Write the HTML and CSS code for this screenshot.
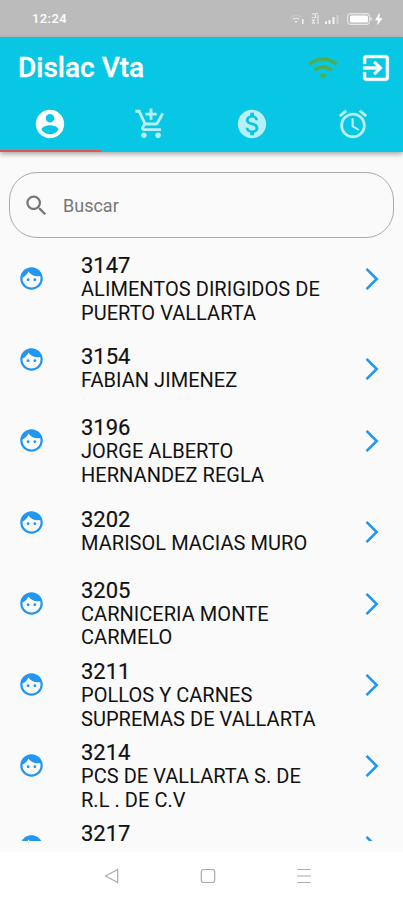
FILE: index.html
```
<!DOCTYPE html>
<html lang="es">
<head>
<meta charset="utf-8">
<title>Dislac Vta</title>
<link rel="stylesheet" href="styles.css">
</head>
<body>
<svg class="defs" width="0" height="0">
  <symbol id="face" viewBox="0 0 24 24"><path d="M9 11.75c-.69 0-1.25.56-1.25 1.25s.56 1.25 1.25 1.25 1.25-.56 1.25-1.25-.56-1.25-1.25-1.25zm6 0c-.69 0-1.25.56-1.25 1.25s.56 1.25 1.25 1.25 1.25-.56 1.25-1.25-.56-1.25-1.25-1.25zM12 2C6.48 2 2 6.48 2 12s4.480 10 10 10 10-4.480 10-10S17.520 2 12 2zm0 18c-4.410 0-8-3.590-8-8 0-.29.02-.58.05-.86 2.360-1.050 4.230-2.980 5.210-5.370C11.070 8.330 14.050 10 17.420 10c.78 0 1.530-.09 2.250-.26.21.71.33 1.470.33 2.260 0 4.410-3.590 8-8 8z"/></symbol>
  <symbol id="next" viewBox="0 0 14 24"><path d="M1.500 1.800 11.700 12 1.500 22.200" fill="none" stroke="currentColor" stroke-width="2.600"/></symbol>
</svg>
<div class="status">
  <span class="clock">12:24</span>
  <svg class="signals" width="96" height="16" viewBox="0 0 96 16">
    <g fill="none" stroke="#fff" stroke-width="1.200">
      <path d="M1 6.500q5-4 10 0" opacity=".2"/>
      <path d="M3 8.500q3-2.500 6 0" opacity=".7"/>
      <path d="M22 3h3.500v3.500H22M26 2.500h2M22 8l3 5M25 8l-3 5M28 4v9" opacity=".65"/>
    </g>
    <g fill="#fff" opacity=".85">
      <path d="M4.500 10h3L6 12zM12 8h1.500v5H12z"/>
      <path d="M35 10.500h2V13h-2zM38.500 9h2v4h-2zM42.500 6h2v7h-2z"/>
      <path d="M46.500 4h2v9h-2z" opacity=".4"/>
    </g>
    <rect x="57.600" y="2.600" width="22" height="10.800" rx="3.500" fill="none" stroke="#fff" stroke-width="1.100" opacity=".65"/>
    <rect x="60" y="4.500" width="18" height="7" rx="1.500" fill="#fff"/>
    <path d="M81 6.500v3" stroke="#fff"/>
    <path d="M89.500 2.500 85.500 9h3l-1 4.500L92 7.500h-3z" fill="#fff" stroke="#fff" stroke-width=".6"/>
  </svg>
</div>
<header class="appbar">
  <div class="toolbar">
    <h1>Dislac Vta</h1>
    <svg class="wifi" width="30" height="22" viewBox="0 0 30 22" fill="none" stroke="#4caf50" stroke-width="3.400"><path d="M1.200 7.200Q15-3.300 28.800 7.200M6.200 13.200q8.800-6.600 17.600 0"/><path d="M11.300 18q3.700-2.700 7.400 0L15 22z" fill="#4caf50" stroke="none"/></svg>
    <svg class="exit" width="34" height="34" viewBox="0 0 24 24" fill="#fff" stroke="#fff" stroke-width=".3"><path d="M10.090 15.590 11.500 17l5-5-5-5-1.410 1.410L12.670 11H3v2h9.670zM19 3H5c-1.110 0-2 .9-2 2v4h2V5h14v14H5v-4H3v4c0 1.100.89 2 2 2h14c1.100 0 2-.9 2-2V5c0-1.100-.9-2-2-2z"/></svg>
  </div>
  <nav class="tabs">
    <a class="tab active"><svg viewBox="0 0 24 24"><path d="M12 2C6.480 2 2 6.480 2 12s4.480 10 10 10 10-4.480 10-10S17.520 2 12 2zm0 3c1.660 0 3 1.340 3 3s-1.340 3-3 3-3-1.340-3-3 1.340-3 3-3zm0 14.200c-2.500 0-4.710-1.280-6-3.220.03-1.990 4-3.080 6-3.080 1.990 0 5.970 1.090 6 3.080-1.290 1.940-3.500 3.220-6 3.220z"/></svg></a>
    <a class="tab"><svg viewBox="0 0 24 24"><path d="M11 9h2V6h3V4h-3V1h-2v3H8v2h3v3zm-4 9c-1.100 0-1.990.9-1.990 2S5.900 22 7 22s2-.9 2-2-.9-2-2-2zm10 0c-1.100 0-1.990.9-1.990 2s.89 2 1.990 2 2-.9 2-2-.9-2-2-2zm-9.830-3.250.03-.12.9-1.630h7.450c.75 0 1.410-.41 1.750-1.030l3.860-7.010L19.420 4h-.01l-1.100 2-2.760 5H8.530l-.13-.27L6.160 6l-.95-2-.94-2H1v2h2l3.600 7.590-1.350 2.450c-.16.28-.25.61-.25.96 0 1.100.9 2 2 2h12v-2H7.420c-.13 0-.25-.11-.25-.25z"/></svg></a>
    <a class="tab"><svg viewBox="0 0 24 24"><path d="M12 2C6.480 2 2 6.480 2 12s4.480 10 10 10 10-4.480 10-10S17.520 2 12 2zm1.410 16.090V20h-2.670v-1.930c-1.710-.36-3.160-1.460-3.270-3.400h1.960c.1 1.050.82 1.870 2.650 1.870 1.960 0 2.400-.98 2.400-1.590 0-.83-.44-1.610-2.670-2.140-2.480-.6-4.180-1.620-4.180-3.670 0-1.720 1.390-2.840 3.110-3.210V4h2.670v1.950c1.860.45 2.790 1.860 2.850 3.390H14.300c-.05-1.110-.64-1.870-2.220-1.870-1.500 0-2.400.68-2.400 1.640 0 .84.65 1.390 2.670 1.910s4.180 1.390 4.180 3.910c-.01 1.830-1.380 2.830-3.120 3.160z"/></svg></a>
    <a class="tab"><svg viewBox="0 0 24 24"><path d="m22 5.720-4.600-3.860-1.290 1.530 4.600 3.860L22 5.720zM7.880 3.390 6.600 1.860 2 5.710l1.290 1.530 4.590-3.850zM12.500 8H11v6l4.750 2.850.75-1.230-4-2.370V8zM12 4c-4.970 0-9 4.030-9 9s4.020 9 9 9c4.970 0 9-4.030 9-9s-4.030-9-9-9zm0 16c-3.870 0-7-3.130-7-7s3.130-7 7-7 7 3.130 7 7-3.130 7-7 7z"/></svg></a>
  </nav>
</header>
<main>
  <div class="search">
    <svg width="27" height="27" viewBox="0 0 24 24" fill="#777"><path d="M15.500 14h-.79l-.28-.27C15.410 12.590 16 11.110 16 9.500 16 5.910 13.090 3 9.500 3S3 5.910 3 9.500 5.910 16 9.500 16c1.610 0 3.090-.59 4.230-1.570l.27.28v.79l5 4.990L20.490 19l-4.990-5zm-6 0C7.010 14 5 11.990 5 9.500S7.010 5 9.500 5 14 7.010 14 9.500 11.990 14 9.500 14z"/></svg>
    <span>Buscar</span>
  </div>
  <ul class="list">
    <li><svg class="face"><use href="#face"/></svg><div class="info"><b>3147</b><p>ALIMENTOS DIRIGIDOS DE<br>PUERTO VALLARTA</p></div><svg class="next"><use href="#next"/></svg></li>
    <li class="short"><svg class="face"><use href="#face"/></svg><div class="info"><b>3154</b><p>FABIAN JIMENEZ</p></div><svg class="next"><use href="#next"/></svg></li>
    <li><svg class="face"><use href="#face"/></svg><div class="info"><b>3196</b><p>JORGE ALBERTO<br>HERNANDEZ REGLA</p></div><svg class="next"><use href="#next"/></svg></li>
    <li class="short"><svg class="face"><use href="#face"/></svg><div class="info"><b>3202</b><p>MARISOL MACIAS MURO</p></div><svg class="next"><use href="#next"/></svg></li>
    <li><svg class="face"><use href="#face"/></svg><div class="info"><b>3205</b><p>CARNICERIA MONTE<br>CARMELO</p></div><svg class="next"><use href="#next"/></svg></li>
    <li><svg class="face"><use href="#face"/></svg><div class="info"><b>3211</b><p>POLLOS Y CARNES<br>SUPREMAS DE VALLARTA</p></div><svg class="next"><use href="#next"/></svg></li>
    <li><svg class="face"><use href="#face"/></svg><div class="info"><b>3214</b><p>PCS DE VALLARTA S. DE<br>R.L . DE C.V</p></div><svg class="next"><use href="#next"/></svg></li>
    <li><svg class="face"><use href="#face"/></svg><div class="info"><b>3217</b></div><svg class="next"><use href="#next"/></svg></li>
  </ul>
</main>
<footer class="navbar">
  <svg width="16" height="16" viewBox="0 0 16 16"><path d="M13.700 1.500v13L1.500 8z"/></svg>
  <svg width="16" height="16" viewBox="0 0 16 16"><rect x="1.300" y="1.500" width="13.400" height="13" rx="2.500"/></svg>
  <svg width="16" height="16" viewBox="0 0 16 16"><path d="M1.200 1.500h13.600M1.200 8h13.600M1.200 14.500h13.600"/></svg>
</footer>
</body>
</html>
```
FILE: styles.css
```
* { box-sizing: border-box; margin: 0; padding: 0; }
body {
  width: 403px; height: 900px; overflow: hidden;
  display: flex; flex-direction: column;
  background: #fafafa; color: #111;
  font-family: Roboto, sans-serif;
}
svg { display: block; flex: none; }
.defs { display: none; }

.status {
  height: 37px; flex: none; background: #bbb; color: #fff;
  display: flex; align-items: center; justify-content: space-between;
  padding: 0 17px 0 32px;
}
.clock { font-size: 13px; font-weight: 500; letter-spacing: .4px; }

.appbar {
  height: 115px; flex: none; background: #08c7e4;
  box-shadow: 0 2px 5px rgba(0, 0, 0, .35);
  display: flex; flex-direction: column; z-index: 1;
}
.toolbar { height: 61px; display: flex; align-items: center; padding: 0 10px 0 18px; }
h1 { flex: 1; font-size: 28px; font-weight: 500; line-height: 32px; color: #fff; -webkit-text-stroke: .3px #fff; }
.wifi { margin-right: 21px; }
.tabs { flex: 1; display: grid; grid-template-columns: repeat(4, 1fr); }
.tab {
  display: flex; justify-content: center; padding-top: 9px;
  fill: #b7f0f8; border-bottom: 2px solid transparent;
}
.tab svg { width: 34px; height: 34px; }
.tab.active { fill: #fff; border-color: #e9514f; }

main { height: 689px; overflow: hidden; }
.search {
  height: 66px; margin: 20px 9px 0; padding-left: 13px;
  border: 1px solid #aaa; border-radius: 28px;
  display: flex; align-items: center; gap: 13px;
  color: #777; font-size: 18px;
}
.list { list-style: none; padding-top: 15px; }
.list li { height: 81.200px; display: flex; padding: 0 24px 0 18px; }
.face { width: 27px; height: 27px; margin-top: 12px; fill: #2196f3; }
.info { flex: 1; padding: 1px 0 0 36px; white-space: nowrap; }
.info b { display: block; font-size: 22px; font-weight: 400; line-height: 24px; -webkit-text-stroke: .2px #111; }
.info p { font-size: 20px; line-height: 23.700px; letter-spacing: .04px; }
.next { width: 14px; height: 24px; margin-top: 14px; color: #2196f3; }
.short .info { padding-top: 11px; }
.short .next { margin-top: 23px; }

.navbar {
  height: 48px; margin-top: 11px; flex: none; background: #fff;
  display: flex; justify-content: center; gap: 80px; padding: 16px 0 0 12px;
}
.navbar svg { fill: none; stroke: #aaa; stroke-width: 1.200; }
```
